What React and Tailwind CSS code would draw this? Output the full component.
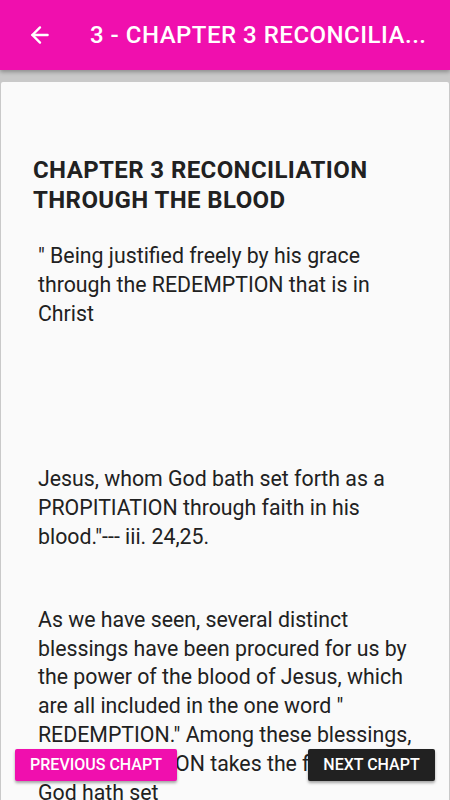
import { ArrowLeft } from 'lucide-react'

const body = "font-['Roboto',sans-serif] text-[21.3px] leading-[28.8px] text-[#212121]"

export default function App() {
  return (
    <div className="w-[450px] h-[800px] overflow-hidden bg-[#c9c9c9] relative font-['Roboto',sans-serif]">
      {/* app bar */}
      <header className="h-[70px] bg-[#f00fae] flex items-center relative z-10 shadow-[0_2px_4px_rgba(0,0,0,0.3)]">
        <div className="w-[80px] flex justify-center">
          <ArrowLeft size={26} color="#ffffff" strokeWidth={2.2} />
        </div>
        <h1 className="ml-[10px] text-white text-[24px] font-medium tracking-[0.5px] whitespace-nowrap">
          3 - CHAPTER 3 RECONCILIA...
        </h1>
      </header>

      {/* card */}
      <main className="mt-[12px] mx-[1px] h-[720px] bg-[#fafafa] rounded-t-[2px] pl-[32px] pr-[28px] pt-[73px]">
        <h2 className="text-[24px] font-bold leading-[30px] tracking-[0.4px] text-[#212121]">
          CHAPTER 3 RECONCILIATION THROUGH THE BLOOD
        </h2>
        <div className="pl-[5px] mt-[27px]">
          <p className={body}>
            " Being justified freely by his grace through the REDEMPTION that is in Christ
          </p>
          <p className={`${body} mt-[137px]`}>
            Jesus, whom God bath set forth as a PROPITIATION through faith in his blood."--- iii. 24,25.
          </p>
          <p className={`${body} mt-[54px]`}>
            As we have seen, several distinct blessings have been procured for us by the power of the blood of Jesus, which are all included in the one word " REDEMPTION." Among these blessings, RECONCILIATION takes the first place. God hath set
          </p>
        </div>
      </main>

      {/* nav buttons */}
      <button className="absolute left-[15px] top-[749px] w-[162px] h-[32px] bg-[#f00fae] text-white text-[16px] font-medium rounded-[2px] shadow-[0_2px_3px_rgba(0,0,0,0.35)]">
        PREVIOUS CHAPT
      </button>
      <button className="absolute left-[308px] top-[749px] w-[127px] h-[32px] bg-[#212121] text-white text-[16px] font-medium rounded-[2px] shadow-[0_2px_3px_rgba(0,0,0,0.35)]">
        NEXT CHAPT
      </button>
    </div>
  )
}
